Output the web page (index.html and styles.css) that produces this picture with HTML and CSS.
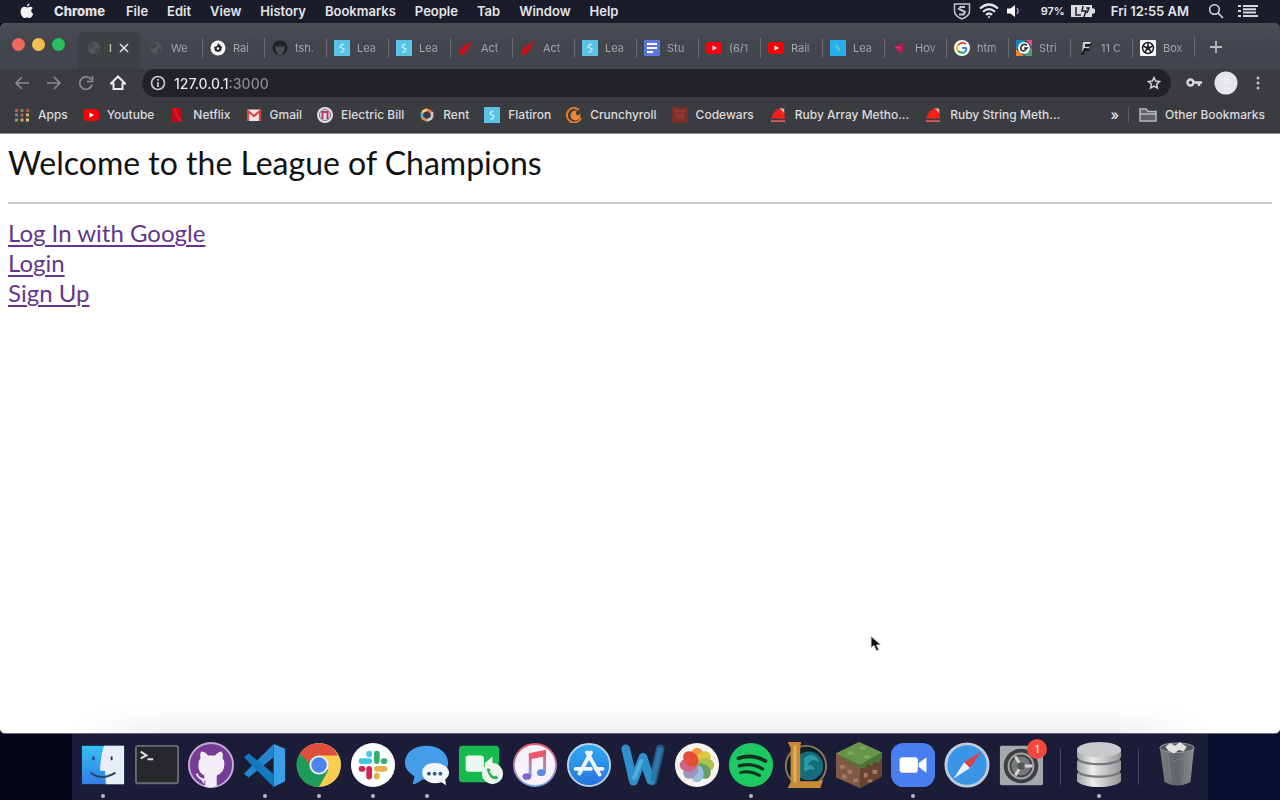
FILE: index.html
```html
<!DOCTYPE html>
<html lang="en">
<head>
<meta charset="utf-8">
<title>League of Champions</title>
<link rel="stylesheet" href="styles.css">
</head>
<body>
<svg class="sprite" aria-hidden="true">
  <defs>
    <symbol id="globe" viewBox="0 0 16 16"><circle cx="8" cy="8" r="6" fill="#54575c"/><path d="M3 5q4-3 6 0l-2 3-4 1zM9 9l4-2-1 5-3 1z" fill="#43464a"/></symbol>
    <symbol id="flatiron" viewBox="0 0 16 16"><rect width="16" height="16" fill="#58c3e4"/><path d="M10 4.500H7.500L6 7l4 2-1.500 3H6" fill="none" stroke="#b5e8f7" stroke-width="1.500"/></symbol>
    <symbol id="rails" viewBox="0 0 16 16"><path d="M1 15q0-6 4-8 4-4 10-6-3 3-4 7-1 4-4 4l-1 3z" fill="#c5141c"/><path d="M1 8l2-1M4 4l2-1" stroke="#7c2128"/></symbol>
    <symbol id="youtube" viewBox="0 0 16 16"><rect y="2" width="16" height="12" rx="4" fill="#fb0007"/><path d="M6.500 5.500v5L11 8z" fill="#fff"/></symbol>
    <symbol id="ruby" viewBox="0 0 18 18"><path d="M1 13L5 5l6-4 5 5 1 7z" fill="#f51f1b"/><path d="M11 1l5 1v5z" fill="#e9b7b3"/><path d="M1 15h16v2H1z" fill="#e15b56"/></symbol>
  </defs>
</svg>
<div class="desktop">
  <header class="menubar">
    <nav class="menus" aria-label="Menu bar">
      <button class="apple" aria-label="Apple menu"><svg width="14" height="16" viewBox="0 0 14 16"><path d="M9.600.5c.1 1.600-1.200 3-2.700 3C6.800 2 8.100.7 9.600.5zM7 4.500c.8 0 1.700-.8 3-.8 1.200 0 2.100.5 2.800 1.400-2.300 1.500-1.900 4.700.5 5.700-.6 1.700-1.900 4.200-3.400 4.200-1 0-1.400-.6-2.600-.6s-1.700.6-2.700.6C2.700 15 .600 11.500.6 8.400c0-3 1.900-4.600 3.700-4.600 1.200 0 2 .7 2.700.7z" fill="#f2f2f4"/></svg></button>
      <button class="app-name">Chrome</button>
      <button>File</button><button>Edit</button><button>View</button><button>History</button><button>Bookmarks</button><button>People</button><button>Tab</button><button>Window</button><button>Help</button>
    </nav>
    <div class="status">
      <svg width="18" height="18" viewBox="0 0 18 18" fill="none" stroke="#c4c4ca" stroke-width="1.500"><path d="M1.500 2h15v7q0 5-7.500 8Q1.500 14 1.500 9z"/><path d="M12 5H7.500L6 7l6 3-1.500 2.500H6" stroke-width="2"/></svg>
      <svg class="wifi" width="20" height="16" viewBox="0 0 20 16" fill="none" stroke="#e4e4e8" stroke-width="2.200"><path d="M1 5.500q9-8 18 0M4 8.800q6-5.500 12 0M7 11.800q3-2.600 6 0"/><circle cx="10" cy="14" r="1" fill="#e4e4e8" stroke="none"/></svg>
      <svg width="14" height="14" viewBox="0 0 14 14"><path d="M0 4.500h3.500L8 1v12L3.500 9.500H0z" fill="#fff"/><path d="M10 4q2 3 0 6" fill="none" stroke="#a9a9b0" stroke-width="1.300"/></svg>
      <span class="percent">97%</span>
      <svg class="battery" width="24" height="14" viewBox="0 0 24 14"><path d="M0 1h21v3l3 1v4l-3 1v3H0z" fill="#dcdce0"/><path d="M5 3v8h5M12 2l-1 5h4l-2 6M15 4h3l-2 5" stroke="#1c1e2b" stroke-width="1.500" fill="none"/></svg>
      <time>Fri 12:55 AM</time>
      <button class="search" aria-label="Search"><svg width="16" height="16" viewBox="0 0 16 16" fill="none" stroke="#dedee2" stroke-width="1.500"><circle cx="6.500" cy="6.500" r="4.800"/><path d="M10 10l5 5"/></svg></button>
      <button aria-label="Notifications"><svg width="20" height="14" viewBox="0 0 20 14" stroke="#d6d6dc" stroke-width="2"><path d="M5 2h15M5 5.300h13M5 8.600h13M5 12h15M0 2h3M0 7h3M0 12h3"/></svg></button>
    </div>
  </header>

  <section class="window">
    <div class="tabstrip">
      <div class="lights"><button class="close" aria-label="Close"></button><button class="minimise" aria-label="Minimise"></button><button class="expand" aria-label="Zoom"></button></div>
      <div class="tabs" role="tablist">
        <button role="tab" aria-selected="true" class="tab active"><svg><use href="#globe"/></svg><span>l</span><svg class="x" viewBox="0 0 10 10"><path d="M1 1l8 8M9 1L1 9" stroke="#dcdde0" stroke-width="1.700"/></svg></button>
        <button role="tab" class="tab"><svg><use href="#globe"/></svg><span>We</span></button>
        <button role="tab" class="tab"><svg viewBox="0 0 16 16"><circle cx="8" cy="8" r="7.500" fill="#f8f8f8"/><path d="M8 3l2 2 2 2-1 4-3 1-3-1-1-4 3-1z" fill="#26282c"/><circle cx="8" cy="8.500" r="1.200" fill="#fff"/></svg><span>Rai</span></button>
        <button role="tab" class="tab"><svg viewBox="0 0 16 16"><circle cx="8" cy="8" r="7.500" fill="#202226"/><path d="M5.500 15v-3Q2 11 4 5.500l2 1h4l2-1q2 5.500-1.500 6.500v3z" fill="#484b51"/></svg><span>tsh.</span></button>
        <button role="tab" class="tab"><svg><use href="#flatiron"/></svg><span>Lea</span></button>
        <button role="tab" class="tab"><svg><use href="#flatiron"/></svg><span>Lea</span></button>
        <button role="tab" class="tab"><svg><use href="#rails"/></svg><span>Act</span></button>
        <button role="tab" class="tab"><svg><use href="#rails"/></svg><span>Act</span></button>
        <button role="tab" class="tab"><svg><use href="#flatiron"/></svg><span>Lea</span></button>
        <button role="tab" class="tab"><svg viewBox="0 0 16 16"><rect width="16" height="16" rx="1" fill="#5b78dc"/><path d="M3 4h10M3 8h10M3 12h6" stroke="#fff" stroke-width="2"/></svg><span>Stu</span></button>
        <button role="tab" class="tab"><svg><use href="#youtube"/></svg><span>(6/1</span></button>
        <button role="tab" class="tab"><svg><use href="#youtube"/></svg><span>Rail</span></button>
        <button role="tab" class="tab"><svg viewBox="0 0 16 16"><rect width="16" height="16" fill="#25b0ec"/><path d="M6 5l4 6" stroke="#7ac9ad" stroke-width="1.500"/></svg><span>Lea</span></button>
        <button role="tab" class="tab"><svg viewBox="0 0 16 16"><path d="M2 7l9-4v9L8 13z" fill="#b71d4f"/><path d="M2 7h6v2z" fill="#e13e68"/></svg><span>Hov</span></button>
        <button role="tab" class="tab"><svg viewBox="0 0 16 16"><circle cx="8" cy="8" r="8" fill="#fff"/><g fill="none" stroke-width="2"><path d="M4 5q4-4 8-1" stroke="#e64a3b"/><path d="M4 5q-2 3 0 6" stroke="#f2b92c"/><path d="M4 11q3 3 7 1" stroke="#37a657"/><path d="M11 12q2-2 1-4H8" stroke="#4584ed"/></g></svg><span>htm</span></button>
        <button role="tab" class="tab"><svg viewBox="0 0 16 16"><path d="M0 0h10L0 10z" fill="#1785b8"/><path d="M10 0h6v7z" fill="#e54c86"/><path d="M0 9l8 7H0z" fill="#ef842f"/><path d="M16 7v9H8z" fill="#4d9b72"/><circle cx="8" cy="8" r="6" fill="#fff"/><path d="M11 5q-5-2-6 2t3 4l3-3H8" stroke="#25333b" stroke-width="1.700" fill="none"/></svg><span>Stri</span></button>
        <button role="tab" class="tab"><svg viewBox="0 0 16 16"><path d="M6 3h8l-1 3H8v3h4l-1 2H7l-1 4H3z" fill="#191b1f"/><path d="M5 2h8l-1 2H7v3h4v1H6l-2 5z" fill="#cfd1d5"/></svg><span>11 C</span></button>
        <button role="tab" class="tab"><svg viewBox="0 0 16 16"><rect width="16" height="16" rx="1" fill="#f9f9f9"/><circle cx="8" cy="8" r="5.500" fill="none" stroke="#202226" stroke-width="1.500"/><path d="M8 3v4M3.500 6L7 8M12.500 6L9 8M5 12l2-3M11 12L9 9" stroke="#202226" stroke-width="1.600"/><circle cx="8" cy="8" r="2" fill="#202226"/></svg><span>Box</span></button>
      </div>
      <button class="newtab" aria-label="New tab"><svg width="14" height="14" viewBox="0 0 14 14"><path d="M7 1v12M1 7h12" stroke="#b8babe" stroke-width="1.800"/></svg></button>
    </div>

    <div class="toolbar">
      <div class="nav">
        <button aria-label="Back"><svg viewBox="0 0 16 16" stroke="#888a8e"><path d="M15 8H2M8 2L2 8l6 6"/></svg></button>
        <button aria-label="Forward"><svg viewBox="0 0 16 16" stroke="#888a8e"><path d="M1 8h13M8 2l6 6-6 6"/></svg></button>
        <button aria-label="Reload"><svg viewBox="0 0 16 16" stroke="#888a8e"><path d="M13 4.500A6.200 6.200 0 1 0 14 9.500M14.500 1v5.500H9"/></svg></button>
        <button aria-label="Home"><svg viewBox="0 0 16 16" stroke="#ececee"><path stroke-width="2" d="M1 8.500L8 1.500l7 7h-2.500V14h-9V8.500z"/></svg></button>
      </div>
      <div class="omnibox">
        <svg width="16" height="16" viewBox="0 0 16 16" fill="none" stroke="#c9cacd" stroke-width="1.700"><circle cx="8" cy="8" r="6.500"/><path d="M8 7v5M8 4v1.700"/></svg>
        <input type="text" aria-label="Address" value="127.0.0.1:3000">
        <button aria-label="Bookmark this page"><svg width="16" height="16" viewBox="0 0 16 16" fill="none" stroke="#cfd0d3" stroke-width="1.500"><path d="M8 2.500l1.600 3.600 3.900.4-2.900 2.600.8 3.900L8 11l-3.400 2 .8-3.900-2.900-2.600 3.900-.4z"/></svg></button>
      </div>
      <div class="actions">
        <button aria-label="Passwords"><svg width="16" height="16" viewBox="0 0 16 16"><circle cx="4.500" cy="7.500" r="3" fill="none" stroke="#d8d9dc" stroke-width="2.400"/><path d="M7 7.500h9M13 7v4" stroke="#d8d9dc" stroke-width="2.600"/></svg></button>
        <button class="profile" aria-label="Profile"><svg width="24" height="24" viewBox="0 0 24 24"><circle cx="12" cy="12" r="11.500" fill="#e6e5ea"/><circle cx="12" cy="10" r="3.500" fill="#eeedf1"/><path d="M8 18q4-5 8 0z" fill="#eeedf1"/></svg></button>
        <button aria-label="More"><svg width="16" height="16" viewBox="0 0 16 16" fill="#c4c5c8"><circle cx="8" cy="3" r="1.500"/><circle cx="8" cy="8" r="1.500"/><circle cx="8" cy="13" r="1.500"/></svg></button>
      </div>
    </div>

    <nav class="bookmarks" aria-label="Bookmarks">
      <a href="#"><svg viewBox="0 0 16 16"><path d="M1 2h3v3H1z" fill="#c6534c"/><path d="M6.500 2h3v3h-3z" fill="#7b8a66"/><path d="M12 2h3v3h-3z" fill="#a3604a"/><path d="M1 6.500h3v3H1z" fill="#6c7fa8"/><path d="M6.500 6.500h3v3h-3z" fill="#b45a4e"/><path d="M12 6.500h3v3h-3z" fill="#d8b160"/><path d="M1 11.500h3v3H1z" fill="#76a77c"/><path d="M6.500 11.500h3v3h-3z" fill="#d2a65e"/><path d="M12 11.500h3v3h-3z" fill="#e0c26c"/></svg>Apps</a>
      <a href="#"><svg><use href="#youtube"/></svg>Youtube</a>
      <a href="#"><svg viewBox="0 0 16 16"><path d="M3 1h10v14H3z" fill="#b90d1b"/><path d="M3 1h3l7 14h-3z" fill="#e11522"/></svg>Netflix</a>
      <a href="#"><svg viewBox="0 0 16 16"><path d="M1 2.500h14v11.500H1z" fill="#f0e5e4"/><path d="M2 14V4l6 5 6-5v10" fill="none" stroke="#cf4b42" stroke-width="2.200"/></svg>Gmail</a>
      <a href="#"><svg viewBox="0 0 16 16"><circle cx="8" cy="8" r="8" fill="#e6e1e8"/><circle cx="8" cy="8" r="5.500" fill="none" stroke="#6d6d93"/><path d="M5.500 12V5h5v7" fill="none" stroke="#b73a53" stroke-width="2"/></svg>Electric Bill</a>
      <a href="#"><svg viewBox="0 0 16 16" fill="none" stroke-width="2.800"><path d="M8 2.500l5 3" stroke="#e0795c"/><path d="M13 5v6" stroke="#e3bcb7"/><path d="M13 11l-5 2.500" stroke="#bdd7e4"/><path d="M8 13.500L3 11" stroke="#e2925c"/><path d="M3 11V5" stroke="#5caac3"/><path d="M3 5l5-2.500" stroke="#f3cf7a"/></svg>Rent</a>
      <a href="#"><svg><use href="#flatiron"/></svg>Flatiron</a>
      <a href="#"><svg viewBox="0 0 16 16"><path d="M15 11A7.300 7.300 0 1 1 13 2.800" fill="none" stroke="#e77b27" stroke-width="2"/><circle cx="9.500" cy="8.500" r="5" fill="#ee8735"/><circle cx="12" cy="6" r="2.200" fill="#3c3d40"/></svg>Crunchyroll</a>
      <a href="#"><svg viewBox="0 0 16 16"><rect width="16" height="16" fill="#782e2b"/><path d="M2 4h12M5 2v9M8 6v9M11 4v9M3 9h10" stroke="#a83e38"/></svg>Codewars</a>
      <a href="#"><svg class="wide"><use href="#ruby"/></svg>Ruby Array Metho...</a>
      <a href="#"><svg class="wide"><use href="#ruby"/></svg>Ruby String Meth...</a>
      <div class="overflow">
        <button aria-label="More bookmarks">»</button>
        <a href="#"><svg class="wide" viewBox="0 0 18 16" fill="#5f6063" stroke="#b7b8bb" stroke-width="1.500"><path d="M1 14V2h6l2 2.500h8V14zM1 7h16"/></svg>Other Bookmarks</a>
      </div>
    </nav>

    <main class="page">
      <h1>Welcome to the League of Champions</h1>
      <hr>
      <ul>
        <li><a href="#">Log In with Google</a></li>
        <li><a href="#">Login</a></li>
        <li><a href="#">Sign Up</a></li>
      </ul>
    </main>
  </section>

  <svg class="pointer" width="12" height="18" viewBox="0 0 12 18" aria-hidden="true"><path d="M1 1v12l3-2.500L6.500 16 9 15l-2.500-5H11z" fill="#111" stroke="#ddd"/></svg>

  <nav class="dock" aria-label="Dock">
    <button class="running" aria-label="Finder"><svg viewBox="0 0 48 48"><defs><linearGradient id="fi" x2="0" y2="1"><stop stop-color="#35c0f1"/><stop offset="1" stop-color="#347de8"/></linearGradient></defs><rect x="2" y="4" width="44" height="40" fill="url(#fi)"/><path d="M25 4h21v40H27l-1-14h-5q0-15 4-26z" fill="#e8eef8"/><path d="M14 15v4M33 15v4" stroke="#203a60" stroke-width="2"/><path d="M11 32q12 9 26 0" fill="none" stroke="#24436a" stroke-width="2"/></svg></button>
    <button aria-label="Terminal"><svg viewBox="0 0 48 48"><rect x="2" y="4" width="44" height="39" rx="2" fill="#26282c" stroke="#666a78" stroke-width="2"/><path d="M7 10l6 4-6 3M14 18h6" fill="none" stroke="#e1e2e5" stroke-width="2"/></svg></button>
    <button aria-label="GitHub Desktop"><svg viewBox="0 0 48 48"><circle cx="24" cy="24" r="23" fill="#743c96" stroke="#c5abd2" stroke-width="2"/><path d="M18 46v-8q-5 2-8-4M17 35q-7-3-6-12 0-4 2-6-1-5 1-7 4 0 7 4h7q4-4 7-4 2 3 1 7 2 2 2 6 0 9-8 12v11q-7 3-13 0z" fill="#f2edf6"/><path d="M9 33q3 7 10 6" fill="none" stroke="#f2edf6" stroke-width="2"/></svg></button>
    <button class="running" aria-label="Visual Studio Code"><svg viewBox="0 0 48 48"><path d="M33 2l12 5v34l-12 6z" fill="#39a0e8"/><path d="M33 2v14L7 37l-5-4z" fill="#2287cf"/><path d="M33 47V33L7 12l-5 4z" fill="#1678be"/></svg></button>
    <button class="running" aria-label="Google Chrome"><svg viewBox="0 0 48 48"><circle cx="24" cy="24" r="23" fill="#f7ce52"/><path d="M4 12a23 23 0 0 0 20 35l10-18-10-5z" fill="#219b59"/><path d="M4 12l12 18 8-8V13z" fill="#219b59"/><path d="M4 12a23 23 0 0 1 40 2H24q-8 0-11 8z" fill="#df4e3d"/><circle cx="24" cy="24" r="10" fill="#f0f0ee"/><circle cx="24" cy="24" r="8" fill="#4f84ec"/></svg></button>
    <button class="running" aria-label="Slack"><svg viewBox="0 0 48 48"><circle cx="24" cy="24" r="23" fill="#fff"/><g stroke-width="6" stroke-linecap="round"><path d="M20 12v1M12 20h8" stroke="#43c5e4"/><path d="M28 12v8M35 20h1" stroke="#35ae7c"/><path d="M28 28h8M28 35v1" stroke="#e6b34a"/><path d="M20 28v8M12 28h1" stroke="#d32454"/></g></svg></button>
    <button class="running" aria-label="Messages"><svg viewBox="0 0 48 48"><path d="M24 4C9 4 1 12 1 22q0 8 10 14l-2 8q6-1 10-5h7c13 0 20-8 20-17S38 4 24 4z" fill="#459de9"/><path d="M32 22c-9 0-13 5-13 10s5 11 13 11q4 0 7-1l5 3-1-6q4-3 4-7c0-5-6-10-15-10z" fill="#f1f7fd"/><circle cx="26" cy="33" r="2" fill="#315a8c"/><circle cx="32" cy="33" r="2" fill="#315a8c"/><circle cx="38" cy="33" r="2" fill="#315a8c"/></svg></button>
    <button aria-label="FaceTime"><svg viewBox="0 0 48 48"><rect x="1" y="4" width="42" height="38" rx="4" fill="#16ba4e"/><rect x="8" y="14" width="19" height="17" rx="3" fill="#eaf7ee"/><path d="M28 22l8-7v16l-8-5z" fill="#eaf7ee"/><circle cx="36" cy="33" r="11" fill="#edf3ef"/><path d="M30 28q3-2 4 2l-1 1q2 4 5 5l2-1q3 3 0 4-8 0-10-11z" fill="#2cae5a"/></svg></button>
    <button aria-label="Music"><svg viewBox="0 0 48 48"><defs><linearGradient id="mu" x2="0" y2="1"><stop stop-color="#ef536f"/><stop offset="1" stop-color="#7ba8ee"/></linearGradient></defs><circle cx="24" cy="24" r="22" fill="#f6f3fa" stroke="url(#mu)" stroke-width="2"/><path d="M19 36V13l15-3v22" fill="none" stroke="url(#mu)" stroke-width="3"/><path d="M19 12l15-3v6l-15 3z" fill="#ec5a6c"/><ellipse cx="15.500" cy="36" rx="4.500" ry="3.500" fill="#8063d6"/><ellipse cx="30.500" cy="32" rx="4.500" ry="3.500" fill="#598fe5"/></svg></button>
    <button aria-label="App Store"><svg viewBox="0 0 48 48"><defs><linearGradient id="as" x2="0" y2="1"><stop stop-color="#32abf2"/><stop offset="1" stop-color="#2673df"/></linearGradient></defs><circle cx="24" cy="24" r="22" fill="url(#as)" stroke="#b9d6ef" stroke-width="2"/><path d="M26 11L14 33M22 11l13 23M10 28h16M31 28h7" fill="none" stroke="#f0f7ff" stroke-width="4" stroke-linecap="round"/></svg></button>
    <button aria-label="Microsoft Word"><svg viewBox="0 0 48 48" fill="none" stroke-linejoin="round"><path d="M42 7l-8 34" stroke="#245985" stroke-width="9" stroke-linecap="round"/><path d="M6 7l8 34 10-25 8 24" stroke="#2f8fcb" stroke-width="9" stroke-linecap="round"/><path d="M42 6l-8 35" stroke="#2f77aa" stroke-width="5"/><path d="M14 39l9-21" stroke="#51aee2" stroke-width="4"/></svg></button>
    <button aria-label="Photos"><svg viewBox="0 0 48 48"><circle cx="24" cy="24" r="23" fill="#f5f4ee"/><g opacity=".9"><ellipse cx="24" cy="15" rx="7" ry="9" fill="#f2902a"/><ellipse cx="24" cy="15" rx="7" ry="9" fill="#d9c334" transform="rotate(45 24 24)"/><ellipse cx="24" cy="15" rx="7" ry="9" fill="#a2bd3c" transform="rotate(90 24 24)"/><ellipse cx="24" cy="15" rx="7" ry="9" fill="#549859" transform="rotate(135 24 24)"/><ellipse cx="24" cy="15" rx="7" ry="9" fill="#90bbe0" transform="rotate(180 24 24)"/><ellipse cx="24" cy="15" rx="7" ry="9" fill="#978bbb" transform="rotate(225 24 24)"/><ellipse cx="24" cy="15" rx="7" ry="9" fill="#c8577c" transform="rotate(270 24 24)"/><ellipse cx="24" cy="15" rx="7" ry="9" fill="#e63c24" transform="rotate(315 24 24)"/></g></svg></button>
    <button class="running" aria-label="Spotify"><svg viewBox="0 0 48 48"><circle cx="24" cy="24" r="23" fill="#1dc963"/><g fill="none" stroke="#14331f" stroke-linecap="round"><path d="M11 17q14-5 28 3" stroke-width="4"/><path d="M12 25q12-4 24 3" stroke-width="3.500"/><path d="M13 32q10-3 20 3" stroke-width="3"/></g></svg></button>
    <button aria-label="League of Legends"><svg viewBox="0 0 48 48"><circle cx="25" cy="25" r="21" fill="#101c27" stroke="#8a7a59" stroke-width="2"/><circle cx="28" cy="25" r="15" fill="#166c78"/><path d="M23 17q10-9 16 4-9-5-12 3 5-1 7 5-5-2-11 2z" fill="#2c99a5"/><path d="M6 0h14l-1 5v36h20l4-2-3 9H6l3-6V6z" fill="#c98a37"/><path d="M12 4h3v38h-3z" fill="#e5b160"/></svg></button>
    <button aria-label="Minecraft"><svg viewBox="0 0 48 48"><path d="M0 12L24 0l24 11v25L25 48 0 37z" fill="#805a44"/><path d="M25 23l23-12v25L25 48z" fill="#664231"/><path d="M0 12L24 0l24 11-23 13z" fill="#67964b"/><path d="M0 12l25 12 23-13v6l-4 5-3-2-4 5-4-2-3 4-5 1-4-4-5-1-4-5-4 1-4-5-3-1z" fill="#487638"/><path d="M4 24h5v4H4zM12 29h5v4h-5zM6 34h5v4H6zM18 38h5v4h-5zM29 32h4v5h-4zM38 29h5v4h-5zM33 39h5v3h-5z" fill="#a47b62"/><path d="M12 10h6v3h-6zM25 5h6v3h-6zM29 14h6v3h-6z" fill="#7daf5e"/></svg></button>
    <button class="running" aria-label="Zoom"><svg viewBox="0 0 48 48"><rect x="1" y="1" width="46" height="46" rx="13" fill="#4a7eee"/><rect x="10" y="16" width="19" height="16" rx="3" fill="#fff"/><path d="M30 22l8-6v16l-8-6z" fill="#fff"/></svg></button>
    <button aria-label="Safari"><svg viewBox="0 0 48 48"><circle cx="24" cy="24" r="22" fill="#3a95e7" stroke="#c0cbdc" stroke-width="3"/><path d="M39 10L27 27l-6-6z" fill="#e23e45"/><path d="M10 38l11-17 6 6z" fill="#edf0f5"/></svg></button>
    <button aria-label="System Preferences"><svg viewBox="0 0 48 48"><rect x="2" y="4" width="45" height="41" rx="2" fill="#a5a8ad"/><circle cx="24" cy="25" r="16" fill="#a5a6a6" stroke="#3c3e41" stroke-width="4"/><circle cx="24" cy="25" r="11" fill="#77797b" stroke="#424446" stroke-width="2"/><path d="M24 25l-6-10M24 25h12M24 25l-6 10" stroke="#d4d5d5" stroke-width="3"/><circle cx="24" cy="25" r="4" fill="#55585a"/></svg><span class="badge">1</span></button>
    <span class="divider"></span>
    <button class="running" aria-label="Database"><svg viewBox="0 0 48 48"><defs><linearGradient id="db"><stop stop-color="#a1a2a4"/><stop offset=".35" stop-color="#ececed"/><stop offset="1" stop-color="#949597"/></linearGradient></defs><path d="M2 8h44v33q-22 12-44 0z" fill="#77787b"/><g fill="url(#db)"><path d="M1 32v9c6 8 40 8 46 0v-9c-7 7-39 7-46 0z"/><path d="M1 19v10c6 8 40 8 46 0V19c-7 7-39 7-46 0z"/><path d="M1 8v8c6 8 40 8 46 0V8z"/></g><ellipse cx="24" cy="8" rx="23" ry="8" fill="#c8c9cb"/></svg></button>
    <span class="divider"></span>
    <button aria-label="Trash"><svg viewBox="0 0 48 48"><defs><linearGradient id="tr"><stop stop-color="#7b8082"/><stop offset=".5" stop-color="#606466"/><stop offset="1" stop-color="#8b8f92"/></linearGradient></defs><path d="M6 5h36l-4 37q-14 7-27 0z" fill="url(#tr)"/><ellipse cx="24" cy="6" rx="18" ry="5" fill="#55595d" stroke="#969a9d"/><path d="M12 5l5-4 5 3 5-4 7 5-3 5-5-2-5 4-6-3z" fill="#e2e2e3"/><path d="M15 15l2 26M33 15l-2 26M20 20l10-3" stroke="#7d8285"/></svg></button>
  </nav>
</div>
</body>
</html>
```
FILE: styles.css
```css
* { box-sizing: border-box; }

body {
  margin: 0;
  font-family: Inter, "Liberation Sans", sans-serif;
  font-size: 12px;
  font-weight: 500;
  color: #e4e4e8;
}

button {
  display: flex;
  align-items: center;
  justify-content: center;
  margin: 0;
  padding: 0;
  border: 0;
  background: none;
  color: inherit;
  font: inherit;
}

svg { display: block; flex: none; }
.sprite { position: absolute; width: 0; height: 0; }

.desktop {
  position: relative;
  display: flex;
  flex-direction: column;
  min-height: 100vh;
  padding-bottom: 66px;
  overflow: hidden;
  background: linear-gradient(90deg, #03051a, #070a24 60%, #0a0e31);
}

.menubar {
  display: flex;
  align-items: center;
  justify-content: space-between;
  height: 23px;
  padding: 0 22px 1px 20px;
  background: #1a1c29;
  font-size: 13px;
  font-weight: 600;
  white-space: nowrap;
}
.menus { display: flex; align-items: center; gap: 19px; }
.app-name { margin: 0 2px 0 1px; font-weight: 800; }
.status { display: flex; align-items: center; gap: 16px; }
.status .wifi { margin: 0 -8px; }
.percent { margin: 0 -10px 0 4px; font-size: 11px; }
.search { margin: 0 -2px 0 3px; }

.window {
  display: flex;
  flex: 1;
  flex-direction: column;
  overflow: hidden;
  border-bottom: 1px solid #6d6e74;
  border-radius: 5px;
  background: #3b3c3f;
}

.tabstrip {
  display: flex;
  height: 46px;
  background: linear-gradient(#4b4e53, #43464d 40%, #42454b);
}
.lights { display: flex; flex: none; gap: 7px; width: 78px; padding: 15px 0 0 12px; }
.lights button { width: 13px; height: 13px; border-radius: 50%; }
.close { background: #ee6a5f; }
.minimise { background: #f5bf4f; }
.expand { background: #27c060; }

.tabs { display: flex; flex: 1; min-width: 0; padding-top: 9px; }
.tab {
  position: relative;
  flex: 1;
  justify-content: flex-start;
  gap: 7px;
  min-width: 0;
  padding: 0 4px 6px 8px;
  color: #a4a6ab;
  font-size: 11px;
  font-weight: 400;
}
.tab svg { width: 16px; height: 16px; }
.tab span {
  flex: 1;
  text-align: left;
  white-space: nowrap;
  mask-image: linear-gradient(90deg, #000 50%, rgba(0, 0, 0, .4));
}
.tab + .tab + .tab::before {
  content: "";
  position: absolute;
  left: 0;
  width: 1px;
  height: 20px;
  background: #6b6d72;
}
.tab.active { border-radius: 7px 7px 0 0; background: #3e4144; color: #dcdde0; }
.tab.active span { flex: none; mask-image: none; }
.tab .x { width: 10px; height: 10px; }
.newtab { flex: none; width: 86px; height: 20px; margin-top: 14px; padding-right: 43px; border-left: 1px solid #6b6d72; }

.toolbar { display: flex; align-items: center; height: 28px; }
.nav { display: flex; width: 142px; padding-left: 6px; flex: none; }
.nav button { width: 32px; }
.nav svg { width: 16px; height: 16px; fill: none; stroke-width: 1.7; }
.omnibox {
  display: flex;
  flex: 1;
  align-items: center;
  gap: 8px;
  height: 28px;
  padding: 0 9px 0 8px;
  border-radius: 14px;
  background: #222326;
}
.omnibox input {
  flex: 1;
  min-width: 0;
  padding: 0;
  border: 0;
  outline: 0;
  background: linear-gradient(90deg, #ececee 55px, #8d8e92 55px);
  background-clip: text;
  color: transparent;
  font: 500 14px Inter, "Liberation Sans", sans-serif;
}
.actions { display: flex; align-items: center; gap: 16px; padding: 0 14px 0 15px; }
.profile { margin: 0 -4px; }

.bookmarks {
  display: flex;
  align-items: center;
  gap: 15px;
  height: 37px;
  padding: 0 15px 1px 14px;
  border-bottom: 1px solid #8b8c90;
  white-space: nowrap;
}
.bookmarks a {
  display: flex;
  align-items: center;
  gap: 8px;
  color: #dadbde;
  text-decoration: none;
}
.bookmarks svg { width: 16px; height: 16px; }
.bookmarks .wide { width: 18px; }
.overflow { display: flex; align-items: center; margin-left: auto; }
.overflow button { padding-right: 9px; font-size: 14px; }
.overflow a { padding-left: 10px; border-left: 1px solid #5f6064; }

.page {
  flex: 1;
  padding: 7px 8px;
  background: #fff;
  color: #111;
  font-family: Papyrus, Lato, "Liberation Sans", sans-serif;
  font-size: 24px;
  font-weight: 400;
  line-height: 30px;
}
.page h1 { margin: 0; font-size: 32px; font-weight: 400; line-height: 44px; }
.page hr { height: 2px; margin: 17px 0 14px; border: 0; background: #cacaca; }
.page ul { margin: 0; padding: 0; list-style: none; }
.page a { color: #63358f; text-decoration-thickness: 2px; text-underline-offset: 3px; }

.pointer { position: absolute; left: 870px; top: 635px; }

.dock {
  position: absolute;
  bottom: 0;
  left: 50%;
  display: flex;
  align-items: center;
  height: 66px;
  padding: 0 4px;
  background: #1a1c38;
  transform: translateX(-50%);
}
.dock::before {
  content: "";
  position: absolute;
  inset: -26px 0 66px;
  background: linear-gradient(transparent, rgba(20, 20, 30, .07));
  mask-image: linear-gradient(90deg, transparent, #000 8%, #000 92%, transparent);
}
.dock button { position: relative; flex: none; width: 54px; height: 66px; padding-bottom: 4px; }
.dock button svg { width: 46px; height: 46px; }
.dock .running::after {
  content: "";
  position: absolute;
  bottom: 2px;
  left: 25px;
  width: 4px;
  height: 4px;
  border-radius: 50%;
  background: #b6b7c2;
}
.divider { width: 24px; height: 36px; background: linear-gradient(#474961, #474961) center / 1px 100% no-repeat; }
.badge {
  position: absolute;
  top: 5px;
  right: 1px;
  width: 20px;
  border-radius: 50%;
  background: #f44740;
  color: #ffd4d0;
  font-size: 11px;
  line-height: 20px;
}
```
